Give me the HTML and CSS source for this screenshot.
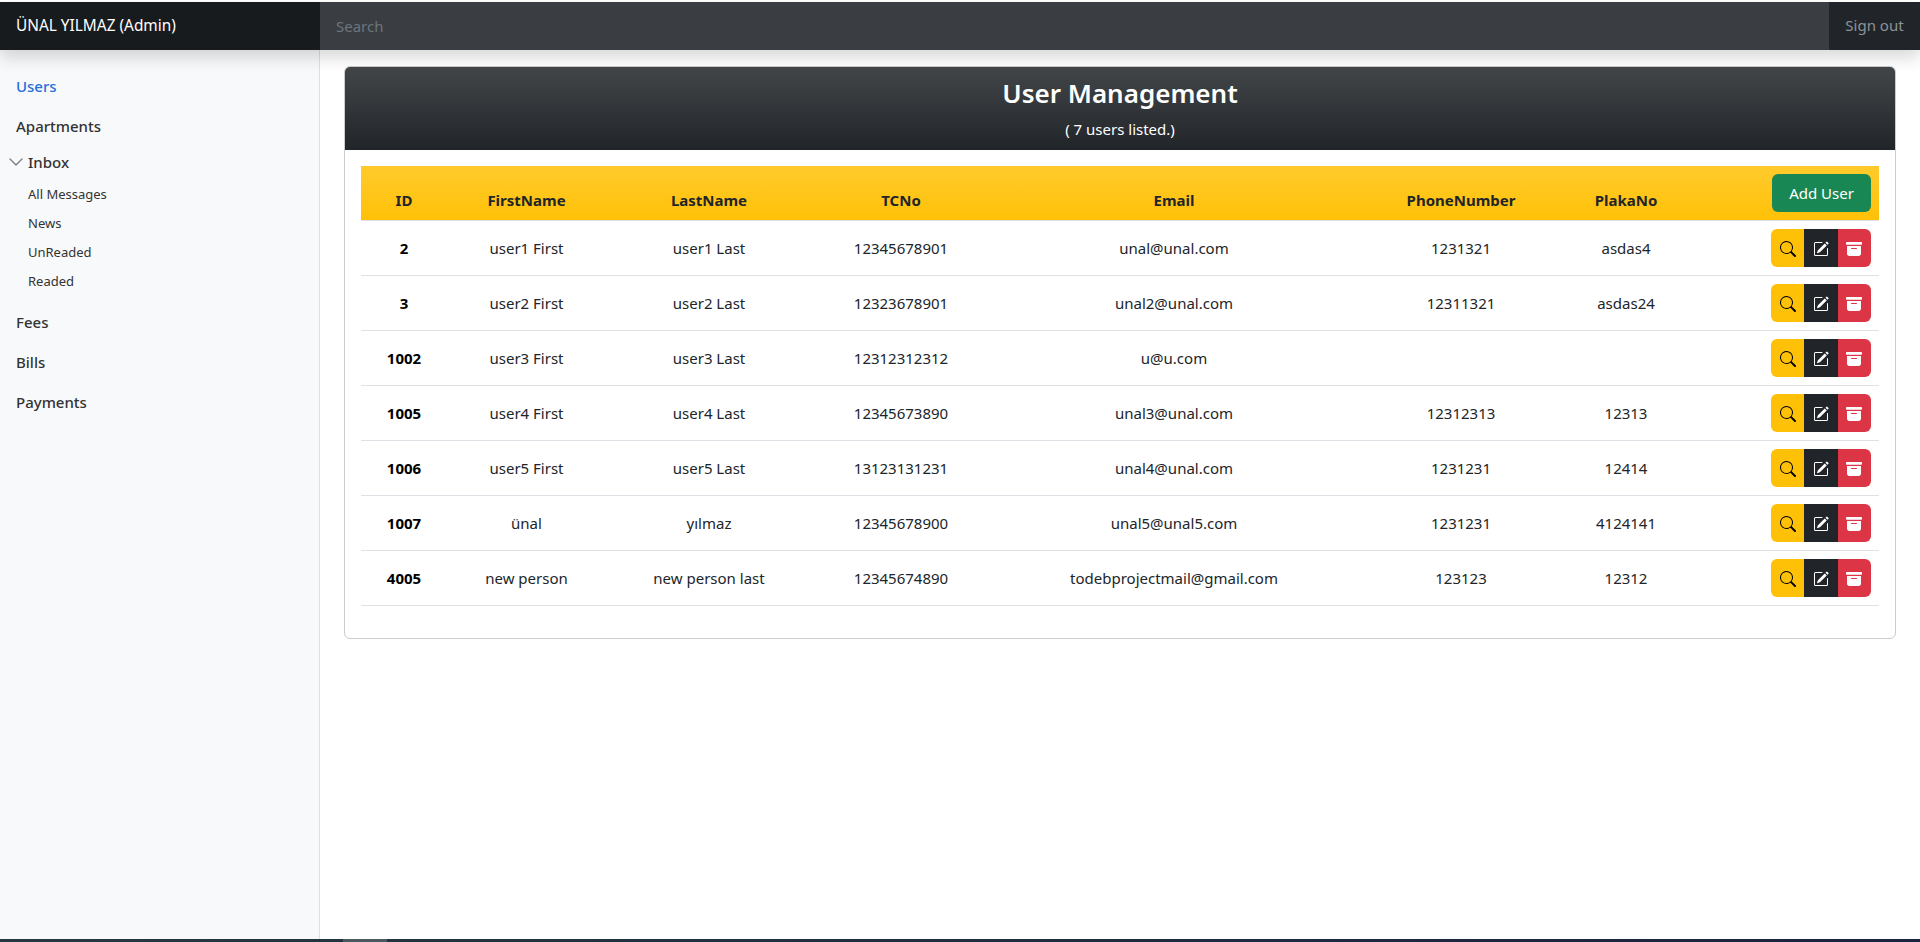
FILE: index.html
```html
<!DOCTYPE html>
<html lang="tr">
<head>
  <meta charset="UTF-8" />
  <title>User Management</title>
  <link rel="stylesheet" href="styles.css">
</head>
<body>
  <header class="navbar">
    <a class="brand" href="#">ÜNAL YILMAZ (Admin)</a>
    <input class="search" type="text" placeholder="Search">
    <a class="signout" href="#">Sign out</a>
  </header>

  <div class="layout">
    <nav class="sidebar">
      <a class="nav-link active" href="#">Users</a>
      <a class="nav-link" href="#">Apartments</a>
      <div class="inbox">
        <button class="inbox-toggle">
          <svg width="16" height="16" viewBox="0 0 16 16" fill="#6c757d" stroke="#6c757d" stroke-width=".4"><path fill-rule="evenodd" d="M1.646 4.646a.5.5 0 0 1 .708 0L8 10.293l5.646-5.647a.5.5 0 0 1 .708.708l-6 6a.5.5 0 0 1-.708 0l-6-6a.5.5 0 0 1 0-.708z"/></svg>
          Inbox
        </button>
        <ul class="sub-list">
          <li><a href="#">All Messages</a></li>
          <li><a href="#">News</a></li>
          <li><a href="#">UnReaded</a></li>
          <li><a href="#">Readed</a></li>
        </ul>
      </div>
      <a class="nav-link" href="#">Fees</a>
      <a class="nav-link" href="#">Bills</a>
      <a class="nav-link" href="#">Payments</a>
    </nav>

    <main class="content">
      <div class="card">
        <div class="card-header">
          <h3>User Management</h3>
          <p>( 7 users listed.)</p>
        </div>
        <div class="card-body">
          <table class="user-table">
            <colgroup>
              <col class="c-id"><col class="c-first"><col class="c-last"><col class="c-tc">
              <col class="c-email"><col class="c-phone"><col class="c-plaka"><col class="c-actions">
            </colgroup>
            <thead>
              <tr>
                <th>ID</th><th>FirstName</th><th>LastName</th><th>TCNo</th>
                <th>Email</th><th>PhoneNumber</th><th>PlakaNo</th>
                <th class="actions"><button class="btn-add">Add User</button></th>
              </tr>
            </thead>
            <tbody id="rows"></tbody>
          </table>
        </div>
      </div>
    </main>
  </div>

  <div class="taskbar"><span class="taskbar-tab"></span></div>

  <script>
    const users = [
      [2, "user1 First", "user1 Last", "12345678901", "unal@unal.com", "1231321", "asdas4"],
      [3, "user2 First", "user2 Last", "12323678901", "unal2@unal.com", "12311321", "asdas24"],
      [1002, "user3 First", "user3 Last", "12312312312", "u@u.com", "", ""],
      [1005, "user4 First", "user4 Last", "12345673890", "unal3@unal.com", "12312313", "12313"],
      [1006, "user5 First", "user5 Last", "13123131231", "unal4@unal.com", "1231231", "12414"],
      [1007, "ünal", "yılmaz", "12345678900", "unal5@unal5.com", "1231231", "4124141"],
      [4005, "new person", "new person last", "12345674890", "todebprojectmail@gmail.com", "123123", "12312"]
    ];

    const actions = `
      <div class="btn-group">
        <button class="btn-view"><svg width="16" height="16" viewBox="0 0 16 16" fill="currentColor"><path d="M11.742 10.344a6.5 6.5 0 1 0-1.397 1.398h-.001c.03.04.062.078.098.115l3.85 3.85a1 1 0 0 0 1.415-1.414l-3.85-3.85a1.007 1.007 0 0 0-.115-.1zM12 6.5a5.5 5.5 0 1 1-11 0 5.5 5.5 0 0 1 11 0z"/></svg></button>
        <button class="btn-edit"><svg width="16" height="16" viewBox="0 0 16 16" fill="currentColor"><path d="M15.502 1.94a.5.5 0 0 1 0 .706L14.459 3.69l-2-2L13.502.646a.5.5 0 0 1 .707 0l1.293 1.293zm-1.75 2.456-2-2L4.939 9.21a.5.5 0 0 0-.121.196l-.805 2.414a.25.25 0 0 0 .316.316l2.414-.805a.5.5 0 0 0 .196-.12l6.813-6.814z"/><path fill-rule="evenodd" d="M1 13.5A1.5 1.5 0 0 0 2.5 15h11a1.5 1.5 0 0 0 1.5-1.5v-6a.5.5 0 0 0-1 0v6a.5.5 0 0 1-.5.5h-11a.5.5 0 0 1-.5-.5v-11a.5.5 0 0 1 .5-.5H9a.5.5 0 0 0 0-1H2.5A1.5 1.5 0 0 0 1 2.5v11z"/></svg></button>
        <button class="btn-delete"><svg width="16" height="16" viewBox="0 0 16 16" fill="currentColor"><path d="M12.643 15C13.979 15 15 13.845 15 12.500V5H1v7.500C1 13.845 2.021 15 3.357 15h9.286zM5.500 7h5a.5.5 0 0 1 0 1h-5a.5.5 0 0 1 0-1zM.8 1a.8.8 0 0 0-.8.8V3a.8.8 0 0 0 .8.8h14.400A.8.8 0 0 0 16 3V1.800a.8.8 0 0 0-.8-.8H.8z"/></svg></button>
      </div>`;

    document.getElementById("rows").innerHTML = users.map(u => `
      <tr>
        <td class="id">${u[0]}</td>
        ${u.slice(1).map(v => `<td>${v}</td>`).join("")}
        <td class="actions">${actions}</td>
      </tr>`).join("");
  </script>
</body>
</html>
```

FILE: styles.css
```css
* {
  box-sizing: border-box;
}

html, body {
  height: 100%;
}

body {
  margin: 0;
  padding-top: 2px;
  display: flex;
  flex-direction: column;
  overflow: hidden;
  background: #fff;
  color: #212529;
  font-family: "Noto Sans", "Open Sans", sans-serif;
  font-size: 15px;
  line-height: 24px;
}

a {
  text-decoration: none;
}

/* top bar */
.navbar {
  display: flex;
  flex: 0 0 48px;
  background: #212529;
  box-shadow: 0 8px 16px rgba(0, 0, 0, .15);
  position: relative;
  z-index: 2;
}

.brand {
  flex: 0 0 320px;
  padding: 0 16px;
  line-height: 47px;
  font-size: 15.4px;
  color: #fff;
  background: #181b1e;
}

.search {
  flex: 1;
  padding: 0 16px;
  border: none;
  outline: none;
  background: #3a3d41;
  color: #fff;
  font: inherit;
}

.search::placeholder {
  color: #6c757d;
}

.signout {
  flex: 0 0 91px;
  text-align: center;
  line-height: 47px;
  color: #8d9297;
}

/* page body */
.layout {
  display: flex;
  flex: 1;
  min-height: 0;
}

.sidebar {
  flex: 0 0 320px;
  padding-top: 16px;
  background: #f8f9fa;
  box-shadow: inset -1px 0 0 rgba(0, 0, 0, .1);
}

.nav-link {
  display: block;
  padding: 8px 16px;
  font-size: 15px;
  font-weight: 500;
  color: #333;
}

.nav-link.active {
  color: #2470dc;
}

.inbox-toggle {
  display: flex;
  align-items: center;
  gap: 4px;
  height: 32px;
  padding: 0 0 0 8px;
  border: none;
  background: none;
  font: inherit;
  font-size: 15px;
  font-weight: 500;
  color: #333;
}

.sub-list {
  list-style: none;
  margin: 0;
  padding: 2px 0 6px 28px;
  font-size: 13px;
  line-height: 29px;
}

.sub-list a {
  color: #333;
}

.content {
  flex: 1;
  padding: 16px 24px 0;
}

/* card */
.card {
  border: 1px solid rgba(0, 0, 0, .2);
  border-radius: 6px;
  overflow: hidden;
}

.card-header {
  height: 83px;
  padding-top: 8px;
  text-align: center;
  color: #fff;
  background: linear-gradient(180deg, #424649, #212529);
}

.card-header h3 {
  margin: 0;
  font-size: 26px;
  line-height: 36px;
  font-weight: 600;
}

.card-header p {
  margin: 6px 0 0;
  font-size: 15px;
}

.card-body {
  padding: 16px 16px 32px;
}

.user-table {
  width: 100%;
  table-layout: fixed;
  border-collapse: collapse;
  text-align: center;
  font-size: 15px;
}

.c-id { width: 86px; }
.c-first { width: 159px; }
.c-last { width: 206px; }
.c-tc { width: 178px; }
.c-email { width: 368px; }
.c-phone { width: 206px; }
.c-plaka { width: 124px; }

.user-table thead tr {
  background: linear-gradient(180deg, #ffca2c, #ffc107);
}

.user-table th {
  padding: 8px;
  vertical-align: bottom;
  font-weight: 700;
  border-bottom: 1px solid #dee2e6;
}

.user-table td {
  padding: 8px;
  vertical-align: middle;
  border-bottom: 1px solid #dee2e6;
}

.user-table td.id {
  font-weight: 700;
  color: #000;
}

.user-table .actions {
  text-align: right;
}

.btn-add {
  height: 38px;
  width: 99px;
  border: none;
  border-radius: 6px;
  background: #198754;
  color: #fff;
  font: inherit;
  font-weight: 400;
}

.btn-group {
  display: inline-flex;
  vertical-align: middle;
  border-radius: 6px;
  overflow: hidden;
}

.btn-group button {
  display: flex;
  align-items: center;
  justify-content: center;
  width: 33.33px;
  height: 38px;
  padding: 2px 0 0;
  border: none;
}

.btn-view {
  background: #ffc107;
  color: #000;
}

.btn-edit {
  background: #212529;
  color: #fff;
}

.btn-delete {
  background: #dc3545;
  color: #fff;
}

/* strip along the bottom of the window */
.taskbar {
  flex: 0 0 3px;
  background: linear-gradient(90deg, #25383f, #1a2340);
}

.taskbar-tab {
  display: block;
  width: 44px;
  height: 3px;
  margin-left: 343px;
  background: #4c5a60;
}
```
